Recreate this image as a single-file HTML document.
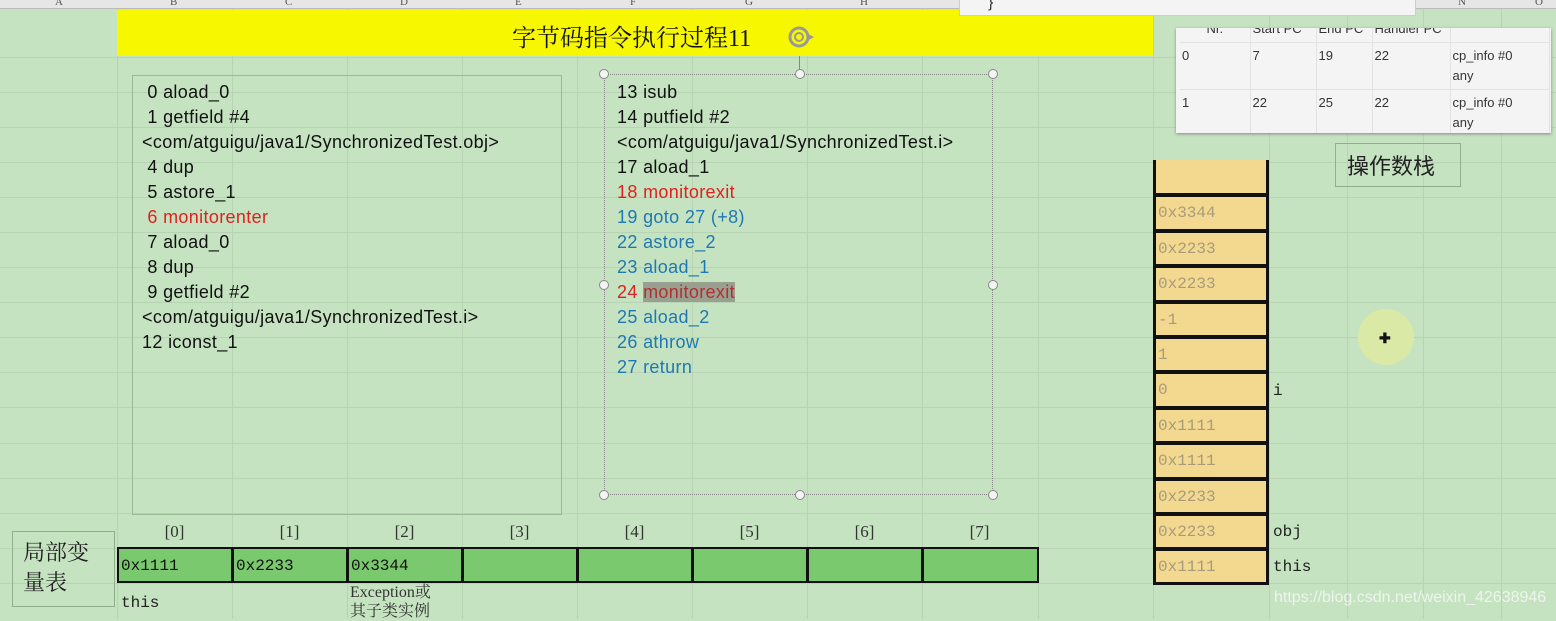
<!DOCTYPE html>
<html><head><meta charset="utf-8"><style>
*{margin:0;padding:0;box-sizing:border-box}
body{width:1556px;height:619px;overflow:hidden;position:relative;background:#c5e3c0;font-family:"Liberation Sans","Noto Sans CJK SC",sans-serif}
.a{position:absolute}
.vl{position:absolute;top:0;height:619px;width:1px;background:#b8d3b3}
.hl{position:absolute;left:0;width:1556px;height:1px;background:#b8d3b3}
.hdr{position:absolute;top:0;left:0;width:1556px;height:9px;background:#e6e6e6;border-bottom:1px solid #bbb;font:11px "Liberation Serif",serif;color:#555}
.hdr span{position:absolute;top:-4px}
.code{position:absolute;font-size:18px;letter-spacing:0.35px;line-height:25px;color:#111;white-space:pre}
.r{color:#e02020}.b{color:#1f78b4}
.h{position:absolute;width:10px;height:10px;border:1.5px solid #888;border-radius:50%;background:#f4f4f4}
.stk{position:absolute;left:1153px;width:116px;height:35.4px;background:#f3d990;border:3px solid #111;border-top-width:2px;border-bottom-width:2px;font:16px "Liberation Mono","DejaVu Sans Mono",monospace;color:#a89a7a;padding:7px 0 0 2px}
.lv{position:absolute;top:547px;height:36px;width:116px;background:#7ac96e;border:2px solid #111;font:16px "Liberation Mono","DejaVu Sans Mono",monospace;color:#111;padding:8px 0 0 2px}
.idx{position:absolute;top:522px;width:115px;text-align:center;font:17px "Liberation Serif",serif;color:#333}
.lab{position:absolute;font:16px "Liberation Mono",monospace;color:#222}
.tb td{font-size:13px;color:#333;vertical-align:top;padding:3px 2px;border-right:1px solid #e2e2e2;border-bottom:1px solid #e2e2e2;line-height:20px}
</style></head><body>
<div class="vl" style="left:117px"></div><div class="vl" style="left:232px"></div><div class="vl" style="left:347px"></div><div class="vl" style="left:462px"></div><div class="vl" style="left:577px"></div><div class="vl" style="left:692px"></div><div class="vl" style="left:807px"></div><div class="vl" style="left:922px"></div><div class="vl" style="left:1038px"></div><div class="vl" style="left:1153px"></div><div class="vl" style="left:1269px"></div><div class="vl" style="left:1347px"></div><div class="vl" style="left:1423px"></div><div class="vl" style="left:1501px"></div>
<div class="hl" style="top:57px"></div><div class="hl" style="top:92px"></div><div class="hl" style="top:127px"></div><div class="hl" style="top:162px"></div><div class="hl" style="top:197px"></div><div class="hl" style="top:232px"></div><div class="hl" style="top:267px"></div><div class="hl" style="top:302px"></div><div class="hl" style="top:337px"></div><div class="hl" style="top:372px"></div><div class="hl" style="top:407px"></div><div class="hl" style="top:443px"></div><div class="hl" style="top:478px"></div><div class="hl" style="top:513px"></div><div class="hl" style="top:548px"></div><div class="hl" style="top:583px"></div>
<div class="hdr"><span style="left:55px">A</span><span style="left:170px">B</span><span style="left:285px">C</span><span style="left:400px">D</span><span style="left:515px">E</span><span style="left:630px">F</span><span style="left:745px">G</span><span style="left:860px">H</span><span style="left:1458px">N</span><span style="left:1535px">O</span></div>
<div class="a" style="left:117px;top:10px;width:1036px;height:46px;background:#f7f700"></div>
<div class="a" style="left:512px;top:18px;font:24px 'Liberation Serif','Noto Serif CJK SC',serif;color:#111">字节码指令执行过程11</div>
<svg class="a" style="left:787px;top:25px" width="28" height="24" viewBox="0 0 28 24"><circle cx="12" cy="12" r="9" fill="none" stroke="#999" stroke-width="3"/><circle cx="12" cy="12" r="4" fill="none" stroke="#999" stroke-width="2"/><path d="M19 8 L27 12 L20 16Z" fill="#999"/></svg>
<div class="a" style="left:959px;top:0;width:457px;height:16px;background:#f4f4f4;border:1px solid #ccc;border-top:none"><span style="position:absolute;left:28px;top:-6px;font-size:16px;color:#333">}</span></div>
<div class="a" style="left:1176px;top:28px;width:375px;height:105px;background:#f4f4f4;box-shadow:0 1px 3px #888;overflow:hidden">
<table class="tb" style="border-collapse:collapse;position:absolute;left:4px;top:-12px;width:370px">
<tr><td style="width:70px;text-align:center">Nr.</td><td style="width:66px">Start PC</td><td style="width:56px">End PC</td><td style="width:78px">Handler PC</td><td></td></tr>
<tr><td>0</td><td>7</td><td>19</td><td>22</td><td>cp_info #0<br>any</td></tr>
<tr><td>1</td><td>22</td><td>25</td><td>22</td><td>cp_info #0<br>any</td></tr></table></div>
<div class="a" style="left:132px;top:75px;width:430px;height:440px;border:1px solid #9ab896"></div>
<div class="code" style="left:142px;top:80px"> 0 aload_0
 1 getfield #4
&lt;com/atguigu/java1/SynchronizedTest.obj&gt;
 4 dup
 5 astore_1
<span class="r"> 6 monitorenter</span>
 7 aload_0
 8 dup
 9 getfield #2
&lt;com/atguigu/java1/SynchronizedTest.i&gt;
12 iconst_1</div>
<div class="a" style="left:604px;top:74px;width:389px;height:421px;border:1px dotted #888"></div>
<div class="a" style="left:799px;top:56px;width:1px;height:18px;background:#888"></div>
<div class="h" style="left:599px;top:69px"></div><div class="h" style="left:795px;top:69px"></div><div class="h" style="left:988px;top:69px"></div>
<div class="h" style="left:599px;top:280px"></div><div class="h" style="left:988px;top:280px"></div>
<div class="h" style="left:599px;top:490px"></div><div class="h" style="left:795px;top:490px"></div><div class="h" style="left:988px;top:490px"></div>
<div class="code" style="left:617px;top:80px">13 isub
14 putfield #2
&lt;com/atguigu/java1/SynchronizedTest.i&gt;
17 aload_1
<span class="r">18 monitorexit</span>
<span class="b">19 goto 27 (+8)</span>
<span class="b">22 astore_2</span>
<span class="b">23 aload_1</span>
<span class="r">24 <span style="background:#9aa090;color:#b03030">monitorexit</span></span>
<span class="b">25 aload_2</span>
<span class="b">26 athrow</span>
<span class="b">27 return</span></div>
<div class="a" style="left:1335px;top:143px;width:126px;height:44px;border:1px solid #8fae8a;font:22px 'Noto Sans CJK SC',sans-serif;color:#222;padding:5px 0 0 11px">操作数栈</div>
<div class="stk" style="top:160px;border-top:none"></div>
<div class="stk" style="top:195.4px">0x3344</div>
<div class="stk" style="top:230.8px">0x2233</div>
<div class="stk" style="top:266.2px">0x2233</div>
<div class="stk" style="top:301.6px">-1</div>
<div class="stk" style="top:337px">1</div>
<div class="stk" style="top:372.4px">0</div>
<div class="stk" style="top:407.8px">0x1111</div>
<div class="stk" style="top:443.2px">0x1111</div>
<div class="stk" style="top:478.6px">0x2233</div>
<div class="stk" style="top:514px">0x2233</div>
<div class="stk" style="top:549.4px;border-bottom-width:3px;height:36px">0x1111</div>
<div class="lab" style="left:1273px;top:382px">i</div>
<div class="lab" style="left:1273px;top:523px">obj</div>
<div class="lab" style="left:1273px;top:558px">this</div>
<div class="a" style="left:1358px;top:309px;width:56px;height:56px;border-radius:50%;background:#dbe9a6"></div>
<div class="a" style="left:1379px;top:330px;font:bold 14px sans-serif;color:#111">✚</div>
<div class="a" style="left:1274px;top:589px;font:16px 'Liberation Sans',sans-serif;color:#eef4ee">https://blog.csdn.net/weixin_42638946</div>
<div class="idx" style="left:117px">[0]</div><div class="idx" style="left:232px">[1]</div><div class="idx" style="left:347px">[2]</div><div class="idx" style="left:462px">[3]</div><div class="idx" style="left:577px">[4]</div><div class="idx" style="left:692px">[5]</div><div class="idx" style="left:807px">[6]</div><div class="idx" style="left:922px">[7]</div>
<div class="lv" style="left:117px">0x1111</div><div class="lv" style="left:232px">0x2233</div><div class="lv" style="left:347px">0x3344</div><div class="lv" style="left:462px"></div><div class="lv" style="left:577px"></div><div class="lv" style="left:692px"></div><div class="lv" style="left:807px"></div><div class="lv" style="left:922px;width:117px"></div>
<div class="a" style="left:12px;top:531px;width:103px;height:76px;border:1px solid #8fae8a;font:22px/30px 'Noto Serif CJK SC',serif;color:#222;padding:5px 0 0 10px">局部变<br>量表</div>
<div class="lab" style="left:121px;top:594px">this</div>
<div class="a" style="left:350px;top:583px;font:16px/19px 'Liberation Serif','Noto Serif CJK SC',serif;color:#333">Exception或<br>其子类实例</div>
</body></html>
